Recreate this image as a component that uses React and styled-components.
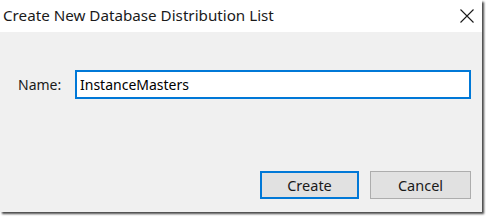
import React, { useState } from 'react';
import styled, { createGlobalStyle } from 'styled-components';

const Global = createGlobalStyle`
    html, body {
        margin: 0;
        padding: 0;
        background: #ffffff;
    }
    body {
        font-family: "Noto Sans", "Open Sans", sans-serif;
    }
`;

const Page = styled.div`
    width: 486px;
    height: 217px;
    overflow: hidden;
`;

const Window = styled.div`
    width: 482px;
    height: 212px;
    background: #f0f0f0;
    box-shadow: 2px 2px 2px rgba(40, 40, 40, 0.85);
    display: flex;
    flex-direction: column;
`;

const TitleBar = styled.div`
    height: 32px;
    background: #ffffff;
    display: flex;
    align-items: center;
    justify-content: space-between;
    padding-left: 3px;
`;

const Title = styled.span`
    font-size: 15.2px;
    color: #1a1a1a;
    margin-top: -3px;
`;

const CloseButton = styled.button`
    width: 30px;
    height: 32px;
    border: none;
    background: transparent;
    display: flex;
    align-items: center;
    justify-content: center;
    padding: 0;
    margin-top: -1px;
    cursor: pointer;
`;

const Body = styled.div`
    flex: 1;
    display: flex;
    flex-direction: column;
    padding: 38px 11px 13px 18px;
`;

const Row = styled.div`
    display: flex;
    align-items: center;
`;

const Label = styled.label`
    width: 57px;
    font-size: 14px;
    color: #1a1a1a;
`;

const Input = styled.input`
    box-sizing: border-box;
    width: 396px;
    height: 29px;
    border: 2px solid #0078d7;
    outline: none;
    padding: 0 3px;
    font-family: "Noto Sans", "Open Sans", sans-serif;
    font-size: 14px;
    color: #000;
    background: #fff;
`;

const Buttons = styled.div`
    margin-top: auto;
    display: flex;
    justify-content: flex-end;
    gap: 11px;
`;

const Button = styled.button`
    box-sizing: border-box;
    width: ${p => (p.primary ? '99px' : '101px')};
    height: 28px;
    background: #e1e1e1;
    border: ${p => (p.primary ? '2px solid #0078d7' : '1px solid #adadad')};
    font-family: "Noto Sans", "Open Sans", sans-serif;
    font-size: 14.5px;
    color: #1a1a1a;
    padding: 0;
`;

export default function App() {
    const [name, setName] = useState('InstanceMasters');

    return (
        <Page>
            <Global />
            <Window>
                <TitleBar>
                    <Title>Create New Database Distribution List</Title>
                    <CloseButton aria-label="Close">
                        <svg width="14" height="14" viewBox="0 0 14 14">
                            <path d="M0.5 0.5 L13.5 13.5 M13.5 0.5 L0.5 13.5" stroke="#1a1a1a" strokeWidth="1.1" fill="none" />
                        </svg>
                    </CloseButton>
                </TitleBar>
                <Body>
                    <Row>
                        <Label>Name:</Label>
                        <Input value={name} onChange={e => setName(e.target.value)} />
                    </Row>
                    <Buttons>
                        <Button primary>Create</Button>
                        <Button>Cancel</Button>
                    </Buttons>
                </Body>
            </Window>
        </Page>
    );
}
